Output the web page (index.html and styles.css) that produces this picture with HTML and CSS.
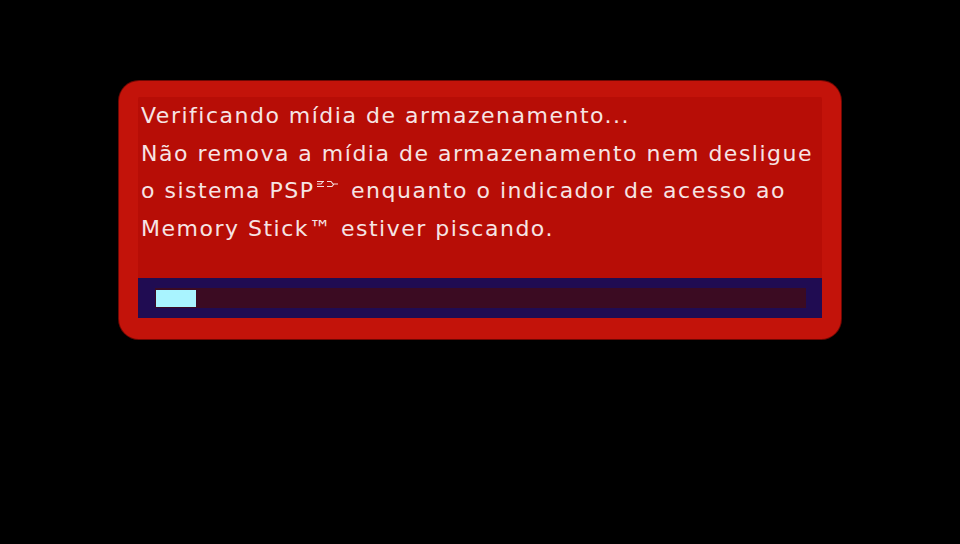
FILE: index.html
```html
<!DOCTYPE html>
<html lang="pt">
<head>
<meta charset="utf-8">
<title>Verificando</title>
<link rel="stylesheet" href="styles.css">
</head>
<body>
<div class="panel">
  <div class="message">
    <p class="line">Verificando mídia de armazenamento...</p>
    <p class="line">Não remova a mídia de armazenamento nem desligue</p>
    <p class="line">o sistema PSP<svg class="mark" width="24" height="8" viewBox="0 0 24 8"><path d="M1 1.5h7M1 4h4l2 -2.5M1 6.5h7M11 1.5h4l2 2.5h5M11 6.5h5l2 -2.5" fill="none" stroke="#f3dede" stroke-width="1.1"/></svg> enquanto o indicador de acesso ao</p>
    <p class="line">Memory Stick™ estiver piscando.</p>
  </div>
  <div class="bar">
    <div class="track"><div class="fill" style="width:40px"></div></div>
  </div>
</div>
</body>
</html>
```

FILE: styles.css
```css
html, body {
  margin: 0;
  padding: 0;
  background: #000;
  width: 960px;
  height: 544px;
  overflow: hidden;
}
.panel {
  box-sizing: border-box;
  margin: 81px 0 0 119px;
  width: 722px;
  height: 258px;
  background: #b70d06;
  border-style: solid;
  border-color: #c3130a;
  border-width: 16px 19px 21px 19px;
  border-radius: 20px;
  box-shadow: 0 0 0 1px #6e0703;
  display: flex;
  flex-direction: column;
}
.message {
  padding-left: 3px;
  font-family: "DejaVu Sans", sans-serif;
  font-size: 22px;
  line-height: 37.5px;
  letter-spacing: 1.5px;
  color: #f6e4e4;
}
.line {
  margin: 0;
  white-space: nowrap;
}
.mark {
  vertical-align: 10px;
  margin: 0 3px 0 1px;
}
.bar {
  margin-top: auto;
  height: 40px;
  background: #200c52;
  padding: 10px 16px 10px 17px;
  box-sizing: border-box;
}
.track {
  height: 20px;
  background: #3b0b22;
  display: flex;
  align-items: center;
}
.fill {
  height: 17px;
  margin-left: 1px;
  background: #a9f4ff;
}
```
